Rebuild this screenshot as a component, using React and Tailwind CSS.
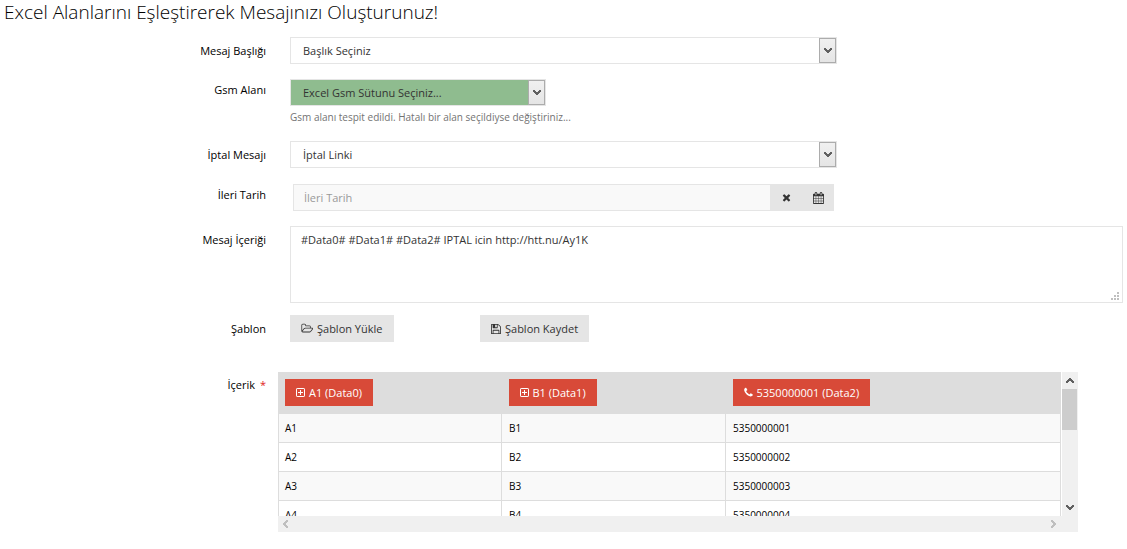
import React from "react";

const PATHS = {
  folder: {
    box: "0 0 1973 1792",
    d: "M1845 931q0-35-53-35h-1088q-40 0-85.5 21.5t-71.5 52.5l-294 363q-18 24-18 40 0 35 53 35h1088q40 0 86-22t71-53l294-363q18-22 18-39zm-1141-163h768v-160q0-40-28-68t-68-28h-576q-40 0-68-28t-28-68v-64q0-40-28-68t-68-28h-320q-40 0-68 28t-28 68v853l256-315q44-53 116-87.5t140-34.5zm1269 163q0 62-46 120l-295 363q-43 53-116 87.5t-140 34.5h-1088q-92 0-158-66t-66-158v-960q0-92 66-158t158-66h320q92 0 158 66t66 158v32h544q92 0 158 66t66 158v160h192q54 0 99 24.5t67 70.5q15 32 15 68z",
  },
  save: {
    box: "128 0 1536 1792",
    d: "M512 1536h768v-384h-768v384zm896 0h128v-896q0-14-10-38.5t-20-34.5l-281-281q-10-10-34-20t-39-10v416q0 40-28 68t-68 28h-576q-40 0-68-28t-28-68v-416h-128v1280h128v-416q0-40 28-68t68-28h832q40 0 68 28t28 68v416zm-384-928v-320q0-13-9.5-22.5t-22.5-9.5h-192q-13 0-22.5 9.5t-9.5 22.5v320q0 13 9.5 22.5t22.5 9.5h192q13 0 22.5-9.5t9.5-22.5zm640 32v928q0 40-28 68t-68 28h-1344q-40 0-68-28t-28-68v-1344q0-40 28-68t68-28h928q40 0 88 20t76 48l280 280q28 28 48 76t20 88z",
  },
  calendar: {
    box: "64 0 1664 1792",
    d: "M192 1664h288v-288h-288v288zm352 0h320v-288h-320v288zm-352-352h288v-320h-288v320zm352 0h320v-320h-320v320zm-352-384h288v-288h-288v288zm736 736h320v-288h-320v288zm-384-736h320v-288h-320v288zm768 736h288v-288h-288v288zm-384-352h320v-320h-320v320zm-352-864v-288q0-13-9.5-22.5t-22.5-9.5h-64q-13 0-22.5 9.5t-9.5 22.5v288q0 13 9.5 22.5t22.5 9.5h64q13 0 22.5-9.5t9.5-22.5zm736 864h288v-320h-288v320zm-384-384h320v-288h-320v288zm384 0h288v-288h-288v288zm32-480v-288q0-13-9.5-22.5t-22.5-9.5h-64q-13 0-22.5 9.5t-9.5 22.5v288q0 13 9.5 22.5t22.5 9.5h64q13 0 22.5-9.5t9.5-22.5zm384-64v1280q0 52-38 90t-90 38h-1408q-52 0-90-38t-38-90v-1280q0-52 38-90t90-38h128v-96q0-66 47-113t113-47h64q66 0 113 47t47 113v96h384v-96q0-66 47-113t113-47h64q66 0 113 47t47 113v96h128q52 0 90 38t38 90z",
  },
  times: {
    box: "192 0 1408 1792",
    d: "M1490 1322q0 40-28 68l-136 136q-28 28-68 28t-68-28l-294-294-294 294q-28 28-68 28t-68-28l-136-136q-28-28-28-68t28-68l294-294-294-294q-28-28-28-68t28-68l136-136q28-28 68-28t68 28l294 294 294-294q28-28 68-28t68 28l136 136q28 28 28 68t-28 68l-294 294 294 294q28 28 28 68z",
  },
  phone: {
    box: "192 0 1408 1792",
    d: "M1600 1240q0 27-10 70.5t-21 68.5q-21 50-122 106-94 51-186 51-27 0-53-3.5t-57.5-12.5-47-14.5-55.5-20.5-49-18q-98-35-175-83-127-79-264-216t-216-264q-48-77-83-175-3-9-18-49t-20.5-55.5-14.5-47-12.5-57.5-3.5-53q0-92 51-186 56-101 106-122 25-11 68.5-21t70.5-10q14 0 21 3 18 6 53 76 11 19 30 54t35 63.5 31 53.5q3 4 17.5 25t21.5 35.5 7 28.5q0 20-28.5 50t-62 55-62 53-28.5 46q0 9 5 22.5t8.5 20.5 14 24 11.5 19q76 137 174 235t235 174q2 1 19 11.5t24 14 20.5 8.5 22.5 5q18 0 46-28.5t53-62 55-62 50-28.5q14 0 28.5 7t35.5 21.5 25 17.5q25 15 53.5 31t63.5 35 54 30q70 35 76 53 3 7 3 21z",
  },
};

function Icon({ name, className }) {
  const icon = PATHS[name];
  return (
    <svg viewBox={icon.box} className={className} fill="currentColor" aria-hidden="true">
      <path d={icon.d} />
    </svg>
  );
}

function PlusSquare() {
  return (
    <svg viewBox="0 0 9 9" className="h-[9px] w-[9px]" fill="none" stroke="currentColor" aria-hidden="true">
      <rect x="0.5" y="0.5" width="8" height="8" rx="0.6" />
      <path d="M2 4.5h5M4.5 2v5" />
    </svg>
  );
}

const CHEVRONS = {
  down: "M0 0h2v1h1v1h1v0h1v-1h1v-1h2v2h-1v1h-1v1h-1v1h-2v-1h-1v-1h-1v-1h-1z",
  up: "M0 5h2v-1h1v-1h2v1h1v1h2v-2h-1v-1h-1v-1h-1v-1h-2v1h-1v1h-1v1h-1z",
  left: "M5 0v2h-1v1h-1v2h1v1h1v2h-2v-1h-1v-1h-1v-1h-1v-2h1v-1h1v-1h1v-1z",
  right: "M0 0v2h1v1h1v2h-1v1h-1v2h2v-1h1v-1h1v-1h1v-2h-1v-1h-1v-1h-1v-1z",
};

function Chevron({ dir }) {
  const wide = dir === "down" || dir === "up";
  return (
    <svg
      viewBox={wide ? "0 0 8 5" : "0 0 5 8"}
      className={wide ? "h-[5px] w-2" : "h-2 w-[5px]"}
      fill="currentColor"
      aria-hidden="true"
    >
      <path d={CHEVRONS[dir]} />
    </svg>
  );
}

function Row({ id, label, raised, className, children }) {
  return (
    <div className={`grid grid-cols-[266px_minmax(0,1fr)] gap-x-6 ${className}`}>
      <label htmlFor={id} className={`text-right text-black ${raised ? "pt-[3px]" : "pt-1.5"}`}>
        {label}
      </label>
      <div>{children}</div>
    </div>
  );
}

function Select({ id, option, width, tone }) {
  return (
    <div className={`relative w-full ${width}`}>
      <select
        id={id}
        className={`block h-[27px] w-full appearance-none border border-[#e5e5e5] pt-px pr-6 pl-3 text-[#333] outline-none ${tone}`}
      >
        <option>{option}</option>
      </select>
      <span className="pointer-events-none absolute top-px right-px flex h-[25px] w-[17px] items-center justify-center border border-[#acacac] bg-linear-to-b from-[#f0f0f0] to-[#e5e5e5] text-[#606060]">
        <Chevron dir="down" />
      </span>
    </div>
  );
}

const GREY_BUTTON = "flex h-[27px] items-center bg-[#e5e5e5] text-[#333]";
const COLUMNS = [
  { text: "A1 (Data0)", width: "w-[223px]" },
  { text: "B1 (Data1)", width: "w-[224px]" },
  { text: "5350000001 (Data2)", width: "", phone: true },
];
const ROWS = [1, 2, 3, 4].map((n) => [`A${n}`, `B${n}`, `535000000${n}`]);

export default function App() {
  return (
    <main className="bg-white pr-1 pb-4 font-['Open_Sans',sans-serif] text-[11px] leading-4 text-black">
      <h1 className="pl-1 text-[19px] leading-6 font-light">Excel Alanlarını Eşleştirerek Mesajınızı Oluşturunuz!</h1>
      <form onSubmit={(e) => e.preventDefault()}>
        <Row id="baslik" label="Mesaj Başlığı" className="mt-[13px]">
          <Select id="baslik" option="Başlık Seçiniz" width="max-w-[547px]" tone="bg-white" />
        </Row>
        <Row id="gsm" label="Gsm Alanı" raised className="mt-[15px]">
          <Select id="gsm" option="Excel Gsm Sütunu Seçiniz..." width="max-w-[256px]" tone="bg-[#8fbc8f]" />
          <p className="pt-[3px] pb-px text-[10px] text-[#737373]">
            Gsm alanı tespit edildi. Hatalı bir alan seçildiyse değiştiriniz...
          </p>
        </Row>
        <Row id="iptal" label="İptal Mesajı" className="mt-[15px]">
          <Select id="iptal" option="İptal Linki" width="max-w-[547px]" tone="bg-white" />
        </Row>
        <Row id="tarih" label="İleri Tarih" raised className="mt-4">
          <div className="ml-[3px] flex h-[27px] max-w-[541px]">
            <input
              id="tarih"
              placeholder="İleri Tarih"
              className="min-w-0 flex-1 border border-r-0 border-[#e5e5e5] bg-[#f9f9f9] px-2.5 outline-none placeholder:text-[#999]"
            />
            <button type="button" aria-label="Temizle" className={`${GREY_BUTTON} w-8 justify-center`}>
              <Icon name="times" className="h-[11px] w-[9px]" />
            </button>
            <button type="button" aria-label="Takvim" className={`${GREY_BUTTON} w-8 justify-center`}>
              <Icon name="calendar" className="h-3 w-[11px]" />
            </button>
          </div>
        </Row>
        <Row id="icerik" label="Mesaj İçeriği" className="mt-[15px]">
          <div className="relative">
            <textarea
              id="icerik"
              defaultValue="#Data0# #Data1# #Data2# IPTAL icin http://htt.nu/Ay1K"
              className="block h-[77px] w-full resize-none border border-[#e5e5e5] px-2.5 py-[5px] text-[#333] outline-none"
            />
            <svg viewBox="0 0 8 8" className="pointer-events-none absolute right-1 bottom-[3px] h-2 w-2" fill="#bfbfbf" aria-hidden="true">
              <path d="M6 0h2v2h-2zM3 3h2v2h-2zM6 3h2v2h-2zM0 6h2v2h-2zM3 6h2v2h-2zM6 6h2v2h-2z" />
            </svg>
          </div>
        </Row>
        <Row id="yukle" label="Şablon" className="mt-3">
          <div className="flex">
            <div className="w-[190px]">
              <button id="yukle" type="button" className={`${GREY_BUTTON} gap-1 px-[11px]`}>
                <Icon name="folder" className="h-[11px] w-3" />
                Şablon Yükle
              </button>
            </div>
            <button type="button" className={`${GREY_BUTTON} gap-1 px-[11px]`}>
              <Icon name="save" className="h-3 w-[10px]" />
              Şablon Kaydet
            </button>
          </div>
        </Row>
        <div className="mt-[30px] grid grid-cols-[266px_minmax(0,1fr)] gap-x-3">
          <span id="tablo" className="pt-[5px] text-right">
            İçerik <span className="pl-0.5 text-[#e02222]">*</span>
          </span>
          <div className="w-full max-w-[800px] bg-[#f0f0f0]">
            <div className="flex h-36">
              <div className="min-w-0 flex-1 overflow-hidden border-r border-white bg-white">
                <table aria-labelledby="tablo" className="w-full table-fixed border-collapse border border-[#ddd] text-[10px]">
                  <thead>
                    <tr className="h-[41px] bg-[#ddd]">
                      {COLUMNS.map((c) => (
                        <th key={c.text} className={`px-[7px] pb-px text-left align-middle font-normal first:pl-1.5 ${c.width}`}>
                          <button type="button" className="flex h-[27px] items-center gap-1 bg-[#d84a38] px-[11px] text-[11px] text-white">
                            {c.phone ? <Icon name="phone" className="h-[11px] w-[9px]" /> : <PlusSquare />}
                            {c.text}
                          </button>
                        </th>
                      ))}
                    </tr>
                  </thead>
                  <tbody>
                    {ROWS.map((row) => (
                      <tr key={row[0]} className="odd:bg-[#f9f9f9]">
                        {row.map((cell) => (
                          <td key={cell} className="border border-[#ddd] px-[7px] py-1.5 first:pl-1.5">
                            {cell}
                          </td>
                        ))}
                      </tr>
                    ))}
                  </tbody>
                </table>
              </div>
              <div className="flex w-4 flex-col items-center pb-1.5 text-[#606060]">
                <div className="flex h-[17px] shrink-0 items-center">
                  <Chevron dir="up" />
                </div>
                <div className="mr-px h-[41px] w-[15px] bg-[#cdcdcd]" />
                <div className="flex flex-1 items-end">
                  <Chevron dir="down" />
                </div>
              </div>
            </div>
            <div className="flex h-4 items-center justify-between pr-[22px] pl-[5px] text-[#bfbfbf]">
              <Chevron dir="left" />
              <Chevron dir="right" />
            </div>
          </div>
        </div>
      </form>
    </main>
  );
}
